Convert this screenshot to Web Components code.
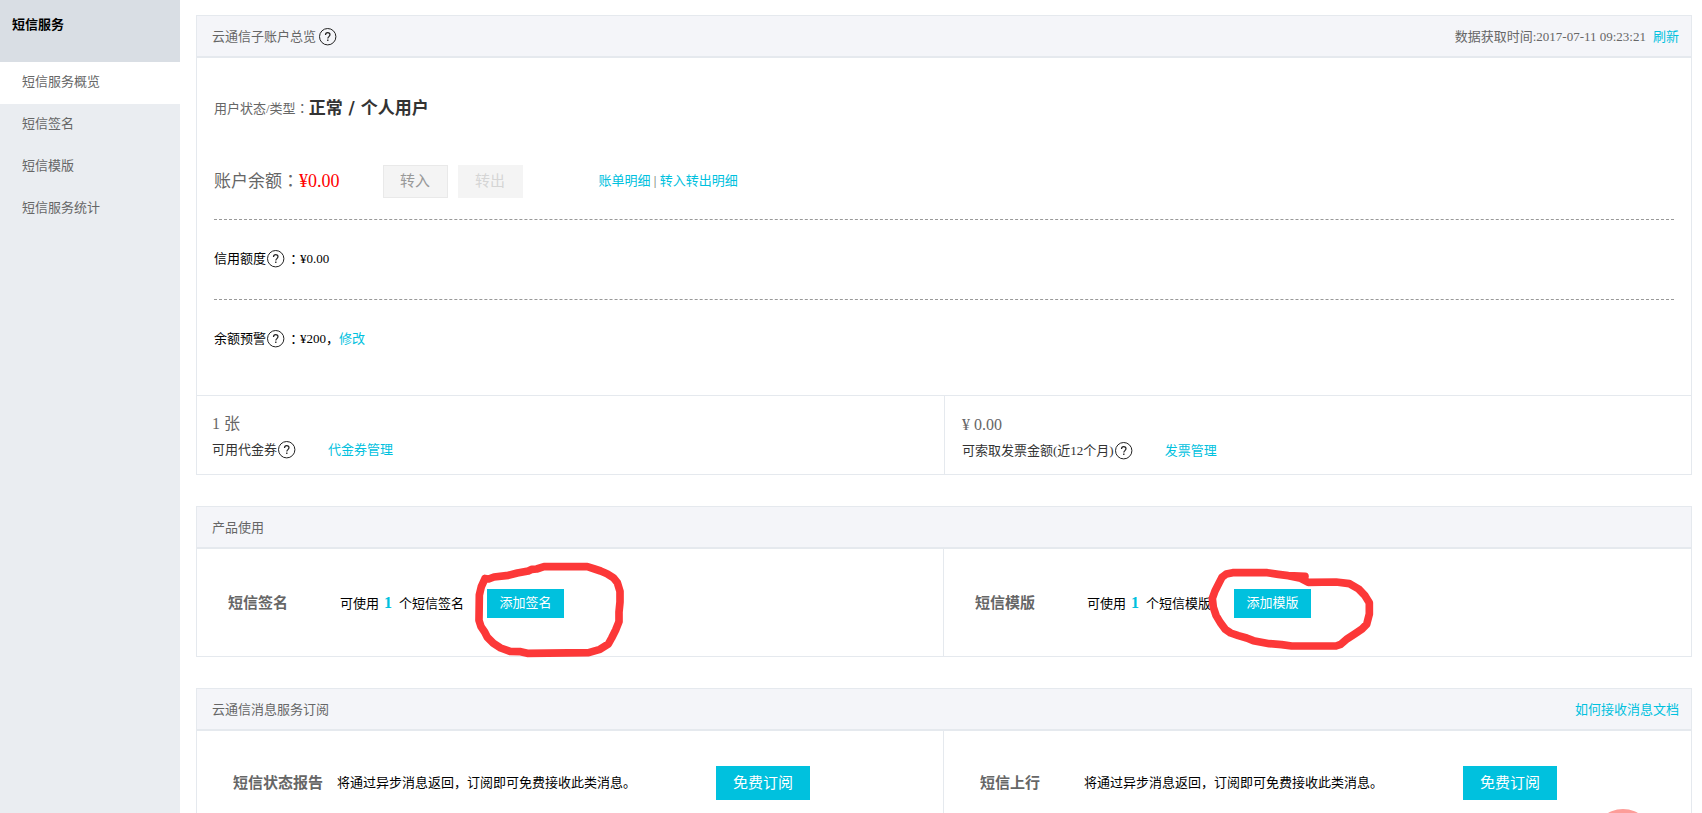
<!DOCTYPE html>
<html lang="zh-CN">
<head>
<meta charset="utf-8">
<title>短信服务</title>
<style>
  body {
    margin: 0;
    font-family: "Liberation Serif", "Noto Sans CJK SC", serif;
    font-size: 13px;
    line-height: 20px;
    color: #000;
    background: #fff;
    --accent: #00c1de;
    --line: #e5e9ee;
    --muted: #666;
  }
</style>
</head>
<body>
<sms-console></sms-console>

<script>
const define = (name, html, setup) => {
  const template = document.createElement('template');
  template.innerHTML = html;
  customElements.define(name, class extends HTMLElement {
    constructor() {
      super();
      this.attachShadow({ mode: 'open' }).append(template.content.cloneNode(true));
    }
    connectedCallback() {
      if (setup) setup(this, this.shadowRoot);
    }
  });
};

/* Round question-mark hint */
define('help-tip', `
  <style>
    :host { display: inline-flex; }
    button { display: flex; padding: 0; border: 0; background: none; color: #222; cursor: pointer; }
    svg { display: block; width: 18px; height: 18px; }
  </style>
  <button type="button" aria-label="帮助">
    <svg viewBox="0 0 18 18" fill="none" stroke="currentColor">
      <circle cx="8.700" cy="8.700" r="8.200" stroke-width="1"/>
      <path d="M6.500 7C6.500 5.500 7.400 4.700 8.700 4.700s2.300.800 2.300 2.100c0 1.700-2.200 1.900-2.200 3.700" stroke-width="1.200"/>
      <path d="M8.800 11.600v1.400" stroke-width="1.300"/>
    </svg>
  </button>`);

define('text-link', `
  <style>
    :host { display: inline-block; }
    a { color: var(--accent); text-decoration: none; }
  </style>
  <a href="#"><slot></slot></a>`);

/* Button: size="small" | "large", or kind="plain" */
define('action-button', `
  <style>
    :host { display: inline-block; }
    button {
      display: block; box-sizing: border-box; margin: 0; cursor: pointer;
      font: inherit; white-space: nowrap; border: 0; color: #fff; background: var(--accent);
    }
    :host([size=small]) button { height: 29px; min-width: 77px; padding: 0 12px; font-size: 13px; }
    :host([size=large]) button { height: 34px; padding: 0 17px; font-size: 15px; }
    :host([kind=plain]) button {
      height: 33px; width: 65px; padding: 0; font-size: 15px;
      color: #999; background: #f4f4f4; border: 1px solid #e9e9e9;
    }
    :host([kind=plain][disabled]) button { color: #d5d5d5; border-color: #f4f4f4; }
  </style>
  <button type="button"><slot></slot></button>`,
  (host, root) => { root.querySelector('button').disabled = host.hasAttribute('disabled'); });

define('side-nav', `
  <style>
    :host { display: block; background: #eaedf1; }
    h1 {
      margin: 0; box-sizing: border-box; height: 62px; padding: 15px 12px;
      font-size: 13px; line-height: 20px; font-weight: bold; background: #d9dee4;
    }
    a { display: block; padding: 0 22px 2px; line-height: 40px; color: var(--muted); text-decoration: none; }
    a[aria-current] { background: #fff; }
  </style>
  <h1>短信服务</h1>
  <nav>
    <a href="#" aria-current="page">短信服务概览</a>
    <a href="#">短信签名</a>
    <a href="#">短信模版</a>
    <a href="#">短信服务统计</a>
  </nav>`);

define('console-panel', `
  <style>
    :host { display: block; border: 1px solid var(--line); }
    header {
      display: flex; justify-content: space-between; align-items: center; box-sizing: border-box;
      height: 42px; padding: 1px 12px 0 15px;
      color: var(--muted); background: #f4f5f9; border-bottom: 2px solid var(--line);
    }
    h2 { display: flex; align-items: center; gap: 3px; margin: 0; font: inherit; }
    .extra { display: flex; gap: 7px; }
  </style>
  <header>
    <h2><slot name="title"></slot></h2>
    <div class="extra"><slot name="extra"></slot></div>
  </header>
  <slot></slot>`);

define('account-overview', `
  <style>
    :host { display: block; }
    .rows { padding: 0 17px 16px; }
    .row { display: flex; align-items: center; }
    .status { height: 100px; padding-bottom: 2px; color: var(--muted); }
    .status strong { font: bold 17px/24px "DejaVu Sans", "Noto Sans CJK SC", sans-serif; color: #333; }
    .balance { height: 42px; padding-bottom: 17px; font-size: 17px; color: var(--muted); }
    .amount { font-size: 18px; color: #f00; }
    .buttons { display: flex; gap: 10px; margin: 0 76px 0 43px; }
    .links { font-size: 13px; }
    .limit { box-sizing: border-box; height: 80px; padding-bottom: 1px; border-top: 1px dashed #999; }
    .limit help-tip { margin: 0 2px 0 1px; }
    .mid { font-family: "Noto Sans CJK TC", sans-serif; }
    .foot { display: grid; grid-template-columns: 1fr 1fr; border-top: 1px solid var(--line); line-height: 26px; color: #333; }
    .cell { padding: 15px 15px 11px; }
    .cell + .cell { padding: 16px 17px 10px; border-left: 1px solid var(--line); }
    .value { font-size: 16px; color: var(--muted); }
    .cell help-tip { margin: 0 32px 0 1px; }
  </style>
  <div class="rows">
    <div class="row status"><span>用户状态/类型<span class="mid" lang="zh-TW">：</span></span><strong>正常 / 个人用户</strong></div>
    <div class="row balance">
      <span>账户余额<span class="mid" lang="zh-TW">：</span><span class="amount">¥0.00</span></span>
      <span class="buttons">
        <action-button kind="plain">转入</action-button>
        <action-button kind="plain" disabled>转出</action-button>
      </span>
      <span class="links"><text-link>账单明细</text-link> | <text-link>转入转出明细</text-link></span>
    </div>
    <div class="row limit">信用额度<help-tip></help-tip><span class="mid" lang="zh-TW">：</span>¥0.00</div>
    <div class="row limit">余额预警<help-tip></help-tip><span class="mid" lang="zh-TW">：</span>¥200，<text-link>修改</text-link></div>
  </div>
  <div class="foot">
    <div class="cell">
      <div class="value">1 张</div>
      <div class="row">可用代金券<help-tip></help-tip><text-link>代金券管理</text-link></div>
    </div>
    <div class="cell">
      <div class="value">¥ 0.00</div>
      <div class="row">可索取发票金额(近12个月)<help-tip></help-tip><text-link>发票管理</text-link></div>
    </div>
  </div>`);

/* Two equal cells side by side with a rule between them */
define('split-row', `
  <style>
    :host { display: grid; grid-template-columns: 1fr 1fr; min-height: 107px; }
    ::slotted(:first-child) { border-right: 1px solid var(--line); }
  </style>
  <slot></slot>`);

/* Label, description and action; "wide" leaves room for a longer description */
define('service-cell', `
  <style>
    :host { display: grid; align-items: center; grid-template-columns: 112px 147px auto; justify-content: start; padding: 1px 0 0 31px; white-space: nowrap; }
    :host([wide]) { grid-template-columns: 104px 379px auto; padding: 0 0 3px 36px; }
    h3 { margin: 0; font-size: 15px; font-weight: bold; color: var(--muted); }
    .action { position: relative; display: flex; }
  </style>
  <h3><slot name="label"></slot></h3>
  <div><slot></slot></div>
  <div class="action"><slot name="action"></slot></div>`);

define('quota-count', `
  <style>
    :host { display: inline-block; margin: 0 7px 0 5px; font-size: 16px; font-weight: bold; color: var(--accent); }
  </style>
  <slot></slot>`);

/* Hand-drawn red loop laid over a button */
define('ink-mark', `
  <style>
    :host { position: absolute; top: -29px; left: -14px; pointer-events: none; }
    :host([shape=oval]) { left: -27px; }
    svg { display: none; overflow: visible; fill: none; stroke: #fc3838; stroke-width: 23; stroke-linecap: round; stroke-linejoin: round; }
    :host([shape=square]) .square, :host([shape=oval]) .oval { display: block; }
  </style>
  <svg class="square" width="154" height="100" viewBox="879 60 462 300" aria-hidden="true">
    <path d="M915 116L926 117L942 111L985 106L1012 99L1045 93L1056 88L1070 87L1092 80L1222 80L1244 87L1262 93L1281 101L1300 113L1312 128L1320 154L1320 186L1317 216L1317 245L1307 270L1295 294L1285 312L1260 328L1226 338L1042 340L1022 335L990 334L962 324L940 310L922 292L914 276L903 260L897 241L898 165L904 140L915 116"/>
  </svg>
  <svg class="oval" width="170" height="95" viewBox="831 60 510 285" aria-hidden="true">
    <path d="M1125 109L1075 107L1045 103L1012 98L908 98L889 102L876 112L866 131L855 153L847 175L850 202L858 226L871 248L886 268L902 279L925 287L950 294L970 302L1018 311L1055 314L1085 318L1218 318L1232 313L1252 296L1275 281L1296 267L1310 253L1318 222L1318 188L1305 167L1286 147L1258 131L1218 126L1135 127L1112 115L1075 107"/>
  </svg>`);

define('sms-console', `
  <style>
    :host { display: grid; grid-template-columns: 180px 1fr; height: 100vh; position: relative; overflow: hidden; }
    main { min-width: 0; overflow-y: auto; scrollbar-width: none; box-sizing: border-box; padding: 15px 10px 31px 16px; }
    console-panel { margin-bottom: 31px; }
    .float {
      position: absolute; right: 49px; bottom: -56px; width: 60px; height: 60px;
      padding: 0; border: 0; border-radius: 50%; background: #fd9d99; cursor: pointer;
    }
  </style>
  <side-nav></side-nav>
  <main>
    <console-panel>
      <span slot="title">云通信子账户总览</span><help-tip slot="title"></help-tip>
      <span slot="extra">数据获取时间:2017-07-11 09:23:21</span><text-link slot="extra">刷新</text-link>
      <account-overview></account-overview>
    </console-panel>

    <console-panel>
      <span slot="title">产品使用</span>
      <split-row>
        <service-cell>
          <span slot="label">短信签名</span>
          可使用<quota-count>1</quota-count>个短信签名
          <action-button slot="action" size="small">添加签名</action-button>
          <ink-mark slot="action" shape="square"></ink-mark>
        </service-cell>
        <service-cell>
          <span slot="label">短信模版</span>
          可使用<quota-count>1</quota-count>个短信模版
          <action-button slot="action" size="small">添加模版</action-button>
          <ink-mark slot="action" shape="oval"></ink-mark>
        </service-cell>
      </split-row>
    </console-panel>

    <console-panel>
      <span slot="title">云通信消息服务订阅</span>
      <text-link slot="extra">如何接收消息文档</text-link>
      <split-row>
        <service-cell wide>
          <span slot="label">短信状态报告</span>
          将通过异步消息返回，订阅即可免费接收此类消息。
          <action-button slot="action" size="large">免费订阅</action-button>
        </service-cell>
        <service-cell wide>
          <span slot="label">短信上行</span>
          将通过异步消息返回，订阅即可免费接收此类消息。
          <action-button slot="action" size="large">免费订阅</action-button>
        </service-cell>
      </split-row>
    </console-panel>
  </main>
  <button class="float" type="button" aria-label="咨询"></button>`);
</script>
</body>
</html>
